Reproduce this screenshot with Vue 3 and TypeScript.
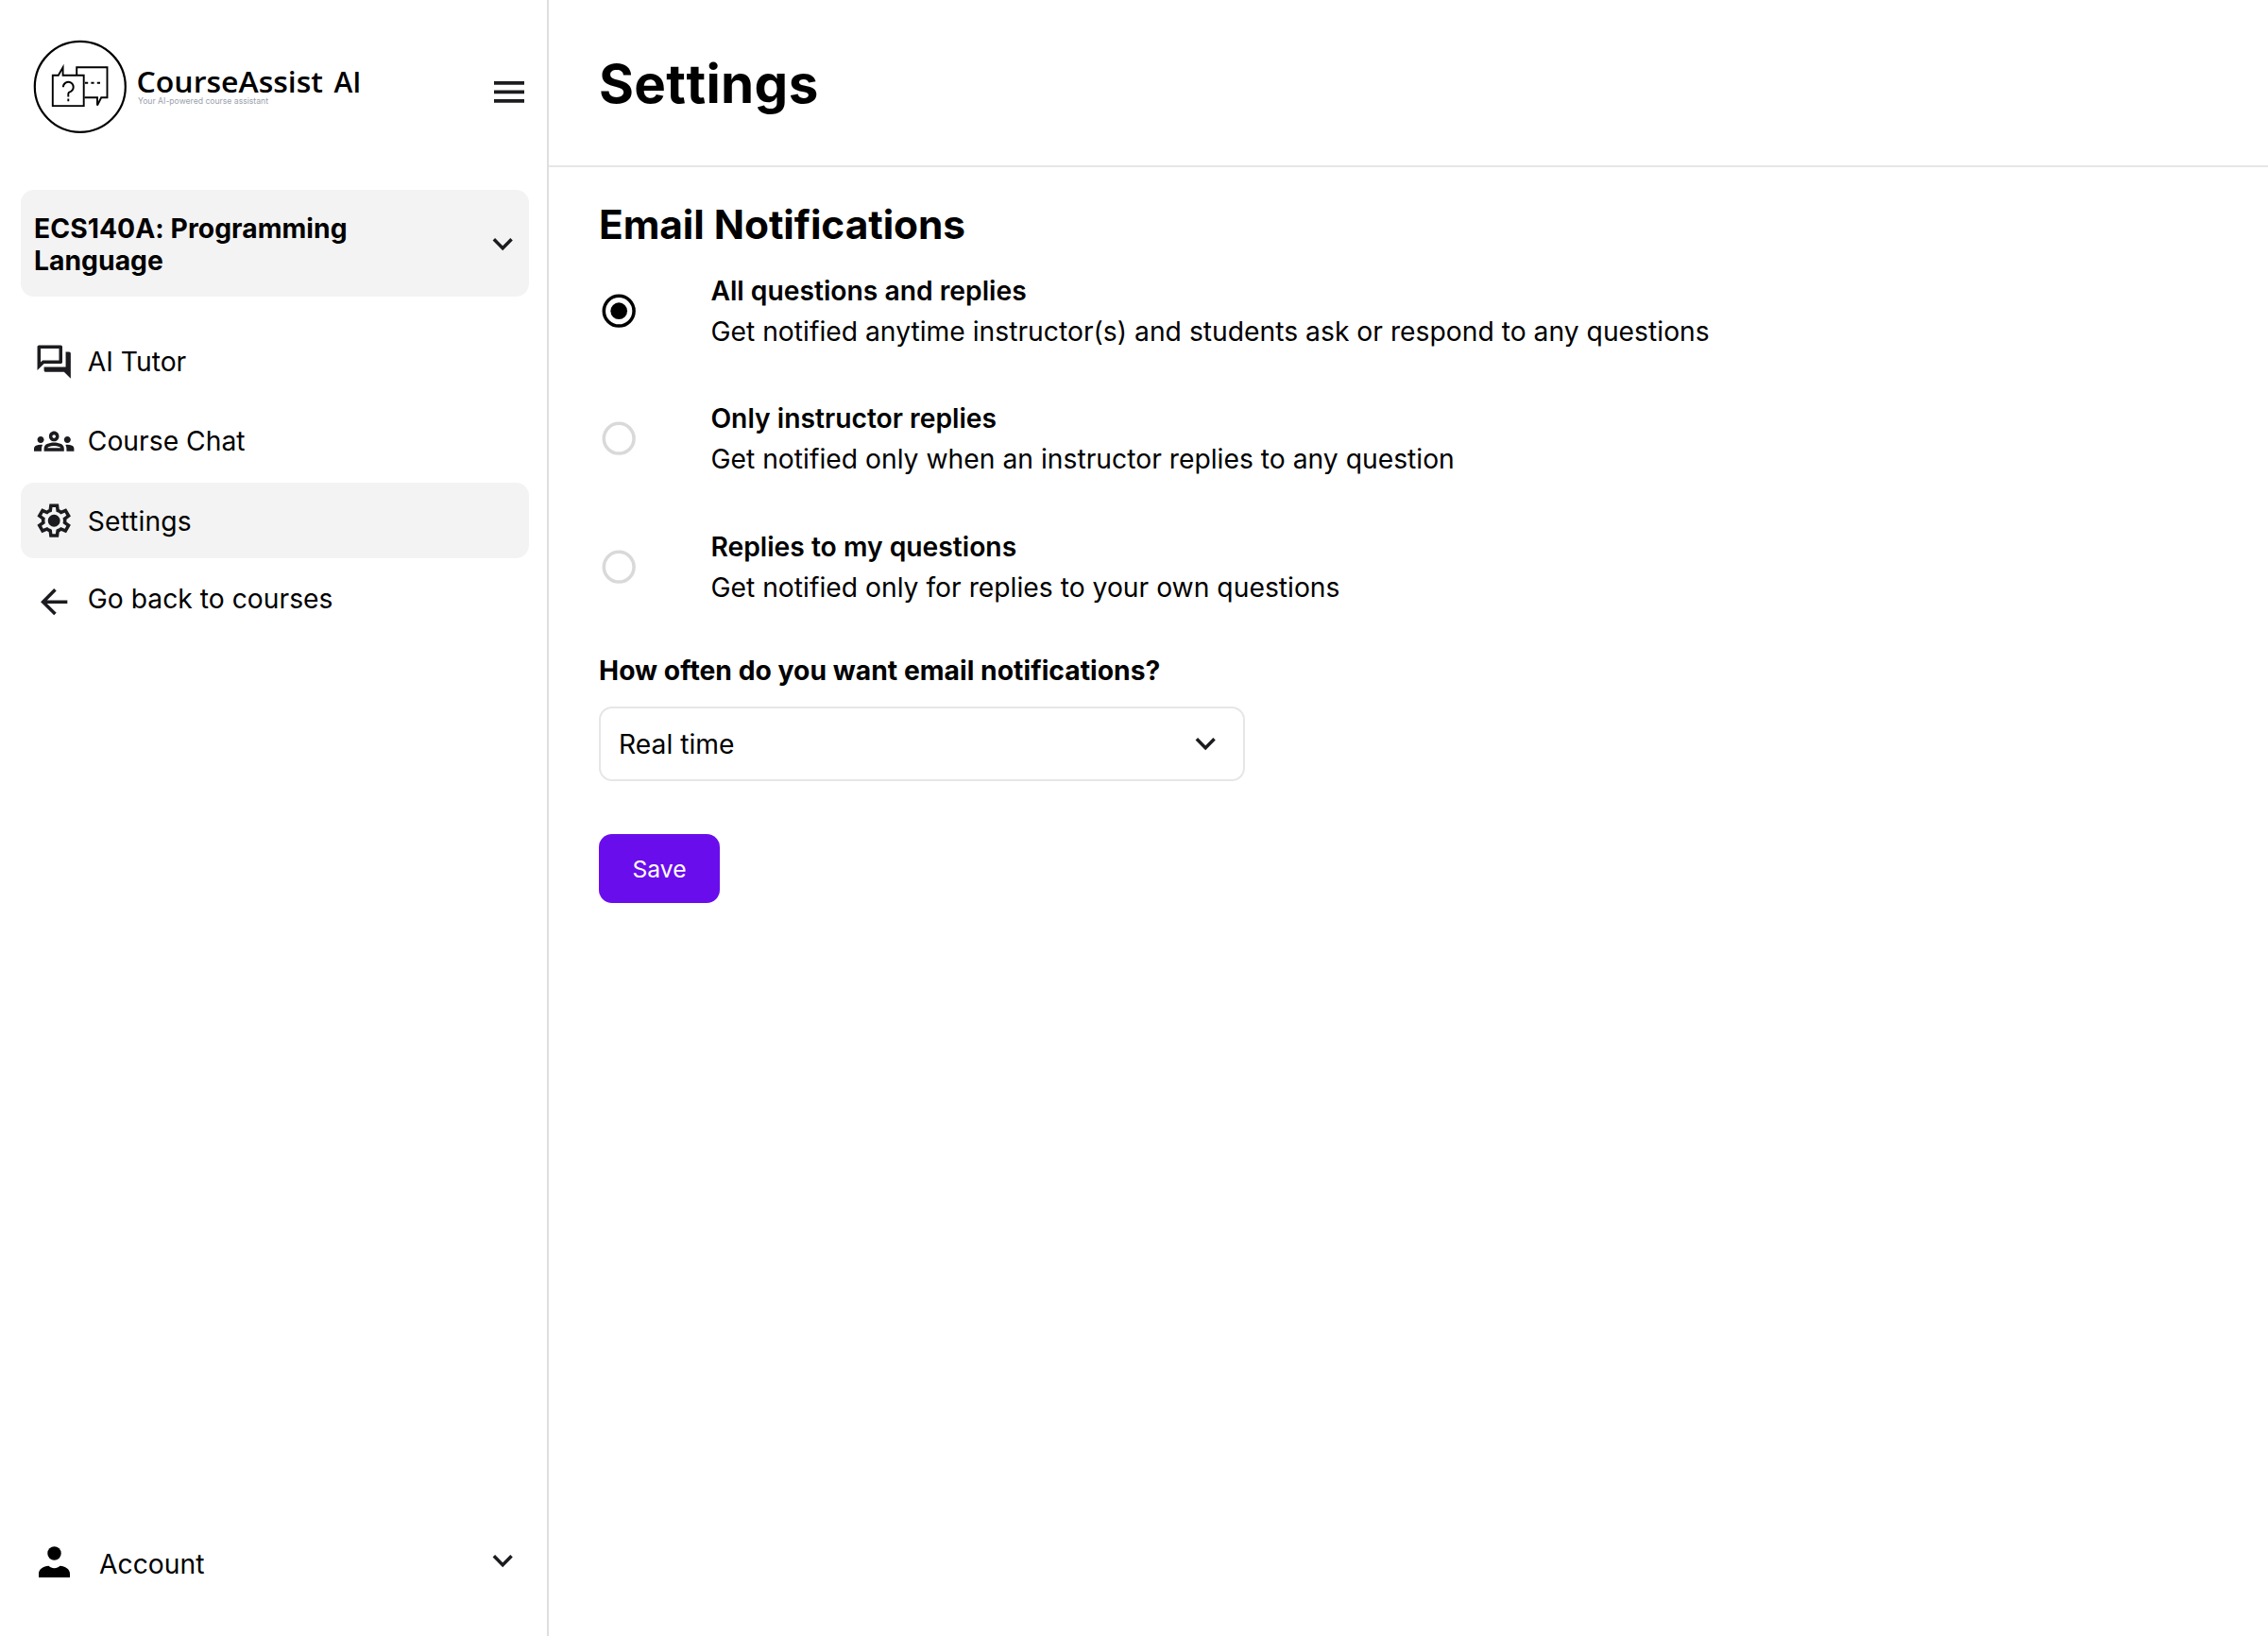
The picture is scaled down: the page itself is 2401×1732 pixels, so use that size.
<script setup lang="ts">
import { ref } from 'vue'

interface NavItem {
  label: string
  icon: string
  active?: boolean
  back?: boolean
}

interface Option {
  title: string
  description: string
}

const navItems: NavItem[] = [
  {
    label: 'AI Tutor',
    icon: 'M15 4v7H5.17L4 12.17V4h11m1-2H3c-.55 0-1 .45-1 1v14l4-4h10c.55 0 1-.45 1-1V3c0-.55-.45-1-1-1zm5 4h-2v9H6v2c0 .55.45 1 1 1h11l4 4V7c0-.55-.45-1-1-1z',
  },
  {
    label: 'Course Chat',
    icon: 'M4 13c1.1 0 2-.9 2-2s-.9-2-2-2-2 .9-2 2 .9 2 2 2zm1.13 1.1c-.37-.06-.74-.1-1.13-.1-.99 0-1.93.21-2.78.58C.48 14.9 0 15.62 0 16.43V18h4.500v-1.610c0-.83.23-1.610.63-2.290zM20 13c1.100 0 2-.9 2-2s-.9-2-2-2-2 .9-2 2 .9 2 2 2zm4 3.430c0-.81-.48-1.530-1.220-1.850-.85-.37-1.790-.58-2.780-.58-.39 0-.76.04-1.130.1.4.68.63 1.460.63 2.290V18H24v-1.570zM16.240 13.650c-1.170-.52-2.610-.9-4.240-.9-1.630 0-3.070.39-4.240.9C6.680 14.130 6 15.210 6 16.390V18h12v-1.610c0-1.180-.68-2.260-1.760-2.740zM8.070 16c.09-.23.13-.39.91-.69.97-.38 1.990-.56 3.020-.56s2.050.18 3.020.56c.77.3.81.46.91.69H8.070zM12 8c.55 0 1 .45 1 1s-.45 1-1 1-1-.45-1-1 .45-1 1-1m0-2c-1.660 0-3 1.340-3 3s1.340 3 3 3 3-1.340 3-3-1.340-3-3-3z',
  },
  {
    label: 'Settings',
    icon: 'M9.250 22l-.4-3.200q-.325-.125-.6125-.3t-.5625-.375L4.700 19.375l-2.750-4.750 2.575-1.950Q4.500 12.500 4.500 12.3375v-.675q0-.1625.025-.3375L1.950 9.375l2.750-4.750 2.975 1.250q.275-.2.575-.375t.6-.3l.4-3.200h5.500l.4 3.200q.325.125.6125.3t.5625.375l2.975-1.250 2.750 4.750-2.575 1.950q.025.175.025.3375v.675q0 .1625-.05.3375l2.575 1.950-2.750 4.750-2.950-1.250q-.275.2-.575.375t-.6.3l-.4 3.200h-5.500zM11 20h1.975l.35-2.650q.775-.2 1.4375-.5875t1.2125-.9375l2.475 1.025.975-1.700-2.150-1.625q.125-.35.175-.7375T17.500 12t-.05-.7875-.175-.7375l2.150-1.625-.975-1.700-2.475 1.050q-.55-.575-1.2125-.9625t-1.4375-.5875L13 4h-1.975l-.35 2.650q-.775.2-1.4375.5875T8.025 8.175L5.550 7.150l-.975 1.700 2.150 1.600q-.125.375-.175.75t-.05.8q0 .4.05.775t.175.75L4.575 15.150l.975 1.700 2.475-1.050q.55.575 1.2125.9625t1.4375.5875L11 20zM12 8.350a3.650 3.650 0 1 0 0 7.300 3.650 3.650 0 0 0 0-7.300z',
    active: true,
  },
  {
    label: 'Go back to courses',
    icon: 'M7.825 13l5.600 5.600L12 20l-8-8 8-8 1.425 1.400L7.825 11H20v2z',
    back: true,
  },
]

const options: Option[] = [
  {
    title: 'All questions and replies',
    description: 'Get notified anytime instructor(s) and students ask or respond to any questions',
  },
  {
    title: 'Only instructor replies',
    description: 'Get notified only when an instructor replies to any question',
  },
  {
    title: 'Replies to my questions',
    description: 'Get notified only for replies to your own questions',
  },
]

const selected = ref(0)
const chevron = 'M12 15.375l-6-6L7.400 7.975l4.600 4.600 4.600-4.600L18 9.375z'
</script>

<template>
  <div class="app">
    <aside class="sidebar">
      <div class="brand">
        <svg class="logo" width="350" height="104" viewBox="34 40 350 104" fill="none" stroke="#000">
          <circle cx="84.800" cy="91.800" r="48" stroke-width="2.200" />
          <g stroke-width="1.900">
            <path d="M55.800 79.800h6l4.800-8.400v8.400h22.100v32.300H55.800z" />
            <path d="M81.200 79.800v-8.600h32.300v32.100h-6.300l-4.200 8.300v-8.300H89.500" />
            <path d="M90 87.700h16.500" stroke-dasharray="3.200 3.200" />
            <path d="M66.900 92.300a5.400 5.400 0 1 1 8.400 4.400c-2.200.8-3 1-3 2.200v3.600M72.300 104.500v2.800" />
          </g>
          <text class="logo-name" x="144.500" y="97.500" textLength="197.500" lengthAdjust="spacingAndGlyphs">CourseAssist</text>
          <text class="logo-name" x="353.500" y="97.500" textLength="29" lengthAdjust="spacingAndGlyphs">AI</text>
          <text class="logo-tag" x="146" y="110.300" textLength="138" lengthAdjust="spacingAndGlyphs">Your AI-powered course assistant</text>
        </svg>
        <svg class="menu" width="32" height="24" viewBox="0 0 32 24" fill="#1c1b1f">
          <path d="M0 0h32v3.700H0zM0 9.500h32v3.700H0zM0 19h32v3.700H0z" />
        </svg>
      </div>

      <button class="course">
        <span>ECS140A: Programming Language</span>
        <svg class="icon" viewBox="0 0 24 24"><path :d="chevron" /></svg>
      </button>

      <nav class="nav">
        <a v-for="item in navItems" :key="item.label" class="nav-item" :class="{ active: item.active, back: item.back }">
          <svg class="icon" viewBox="0 0 24 24"><path :d="item.icon" fill-rule="evenodd" /></svg>
          <span>{{ item.label }}</span>
        </a>
      </nav>

      <div class="account">
        <svg width="33" height="33" viewBox="0 0 33 33">
          <ellipse cx="16.500" cy="7.500" rx="7.200" ry="7.300" />
          <path d="M0 33v-4c0-5 5-8 10.500-8.300 3 3.300 9 3.300 12 0C28 21 33 24 33 29v4z" />
        </svg>
        <span>Account</span>
        <svg class="icon" viewBox="0 0 24 24"><path :d="chevron" /></svg>
      </div>
    </aside>

    <main class="main">
      <header class="header"><h1>Settings</h1></header>
      <section class="content">
        <h2>Email Notifications</h2>
        <div class="options">
          <label v-for="(option, i) in options" :key="option.title" class="option" @click="selected = i">
            <svg class="radio" :class="{ on: selected === i }" viewBox="0 0 24 24">
              <circle cx="12" cy="12" r="9" fill="none" stroke-width="2" />
              <circle v-if="selected === i" cx="12" cy="12" r="5" stroke="none" />
            </svg>
            <span class="option-text">
              <strong>{{ option.title }}</strong>
              <span>{{ option.description }}</span>
            </span>
          </label>
        </div>
        <h3>How often do you want email notifications?</h3>
        <div class="select">
          <span>Real time</span>
          <svg class="icon" viewBox="0 0 24 24"><path :d="chevron" /></svg>
        </div>
        <button class="save">Save</button>
      </section>
    </main>
  </div>
</template>

<style>
body {
  margin: 0;
  background: #fff;
}
</style>

<style scoped>
.app {
  display: flex;
  height: 1732px;
  font-family: Inter, sans-serif;
  font-size: 28.260px;
  line-height: 34px;
  letter-spacing: 0.010px;
  font-variant-ligatures: none;
  color: #000;
  background: #fff;
}
.app * {
  box-sizing: border-box;
}
.sidebar {
  width: 581px;
  flex: none;
  display: flex;
  flex-direction: column;
  padding: 40px 19px 0 22px;
  border-right: 2px solid #dedede;
}
.brand {
  display: flex;
  justify-content: space-between;
  align-items: flex-start;
  height: 161px;
  padding: 0 5px 0 12px;
}
.logo-name {
  font: 650 30px "Open Sans", sans-serif;
  letter-spacing: 0;
  fill: #000;
  stroke: none;
}
.logo-tag {
  font: 400 9px Inter, sans-serif;
  letter-spacing: 0;
  fill: #9aa1ab;
  stroke: none;
}
.menu {
  margin-top: 46px;
}
.icon {
  flex: none;
  width: 42.400px;
  height: 42.400px;
  fill: #1c1b1f;
}
button {
  border: 0;
  font: inherit;
  text-align: left;
}
.course {
  display: flex;
  align-items: center;
  justify-content: space-between;
  height: 113px;
  padding: 3px 7px 0 14px;
  border-radius: 14px;
  background: #f3f3f3;
  color: #000;
  font-weight: 700;
  letter-spacing: 0.050px;
}
.course span {
  width: 380px;
}
.nav {
  display: flex;
  flex-direction: column;
  padding-top: 29px;
}
.nav-item {
  display: flex;
  align-items: center;
  gap: 14.200px;
  height: 79.500px;
  margin-bottom: 4.700px;
  padding-left: 14.200px;
  border-radius: 14px;
}
.nav-item span {
  margin-top: 1px;
}
.nav-item.active {
  background: #f3f3f3;
}
.nav-item.active span {
  font-kerning: none;
  letter-spacing: 0.150px;
}
.nav-item.back .icon {
  margin-top: 3px;
}
.nav-item.back span {
  margin-top: -2px;
}
.account {
  display: flex;
  align-items: center;
  margin-top: auto;
  height: 42px;
  margin-bottom: 58px;
  padding: 0 7px 0 19px;
}
.account span {
  flex: 1;
  padding: 5px 0 0 31px;
}
.main {
  flex: 1;
}
.header {
  height: 177px;
  padding: 55px 53px 0;
  border-bottom: 2px solid #e6e6e6;
}
h1,
h2,
h3 {
  margin: 0;
  letter-spacing: 0;
}
h1 {
  font-size: 56.500px;
  line-height: 68px;
  font-weight: 700;
  font-kerning: none;
  letter-spacing: 0.350px;
}
.content {
  padding: 35px 53px;
}
h2 {
  font-size: 42.400px;
  line-height: 51px;
  font-weight: 700;
  letter-spacing: -0.060px;
}
.options {
  display: flex;
  flex-direction: column;
  gap: 57.500px;
  margin-top: 27px;
}
.option {
  display: flex;
  align-items: center;
  gap: 76px;
  height: 78px;
}
.radio {
  flex: none;
  width: 42.400px;
  height: 42.400px;
  stroke: #d9d9d9;
}
.radio.on {
  stroke: #000;
}
.option-text {
  display: flex;
  flex-direction: column;
  gap: 9px;
}
.option-text strong {
  font-weight: 600;
  letter-spacing: 0;
}
h3 {
  margin-top: 53.500px;
  font-size: 28.260px;
  line-height: 34px;
  font-weight: 700;
  letter-spacing: 0.030px;
}
.select {
  display: flex;
  align-items: center;
  justify-content: space-between;
  width: 684px;
  height: 79px;
  margin-top: 21.500px;
  padding: 1px 19px 0;
  border: 2px solid #e6e6e6;
  border-radius: 14px;
}
.save {
  display: flex;
  align-items: center;
  justify-content: center;
  width: 128px;
  height: 73px;
  margin-top: 56px;
  border-radius: 14px;
  background: #6a0dec;
  color: #fff;
  font-size: 24.700px;
  letter-spacing: 0;
}
</style>
